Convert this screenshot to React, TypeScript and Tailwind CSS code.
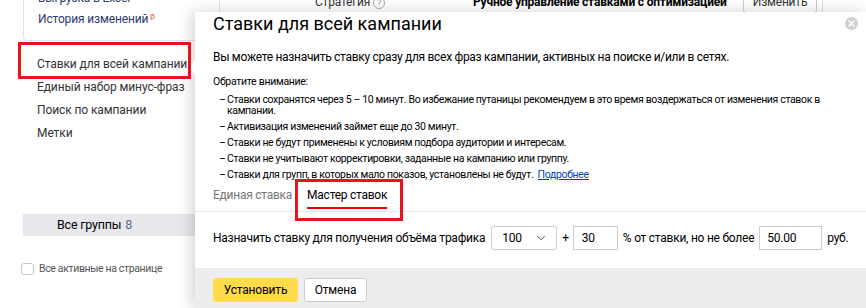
import { ChevronDown } from 'lucide-react';

const navItems = ['Ставки для всей кампании', 'Единый набор минус-фраз', 'Поиск по кампании', 'Метки'];

const notes = [
  'Активизация изменений займет еще до 30 минут.',
  'Ставки не будут применены к условиям подбора аудитории и интересам.',
  'Ставки не учитывают корректировки, заданные на кампанию или группу.',
];

function Sidebar() {
  return (
    <aside className="w-[220px] shrink-0 pl-[23px]">
      {/* tools box, top is scrolled out of view */}
      <div className="-mt-[13px] pb-[10px] pl-[14px] border border-[#e3e3e3] rounded-bl-[4px] text-[12px] tracking-[-0.15px] leading-[21px] text-[#2d3a6e]">
        <div>Выгрузка в Excel</div>
        <div>
          История изменений
          <sup className="ml-[2px] text-[8px] text-[#f33]">β</sup>
        </div>
      </div>

      <ul className="mt-[12px] pl-[14px] text-[12px] tracking-[-0.1px] leading-[23px] text-[#333]">
        {navItems.map((item) => (
          <li key={item}>{item}</li>
        ))}
      </ul>

      <div className="mt-[69px] h-[22px] flex items-center pl-[34px] bg-[#e8e8ec] text-[12.5px] tracking-[-0.2px] text-black">
        Все группы <span className="ml-[4px] text-[#5b6a8c]">8</span>
      </div>

      <label className="mt-[25px] -ml-[2px] flex items-center gap-[5px] text-[10.5px] tracking-[-0.35px] text-[#555]">
        <span className="w-[13px] h-[12px] rounded-[3px] border border-[#c8c8c8] bg-white" />
        Все активные на странице
      </label>
    </aside>
  );
}

function TopStrip() {
  return (
    <div className="-mt-[9px] flex items-center h-[22px] text-[12px] tracking-[-0.2px]">
      <span className="w-[253px] shrink-0 pl-[95px] text-[#333] whitespace-nowrap">
        Стратегия{' '}
        <span className="inline-block w-[12px] h-[12px] rounded-full border border-[#aaa] text-[9px] leading-[10px] text-center text-[#999]">?</span>
      </span>
      <span className="w-[270px] shrink-0 overflow-hidden font-bold text-black whitespace-nowrap">
        Ручное управление ставками с оптимизацией
      </span>
      <span className="w-[74px] h-[22px] flex items-center justify-center border border-[#ccc] rounded-[3px] text-[#333]">Изменить</span>
      <span className="ml-[5px] h-[22px] border-l border-[#ddd]" />
    </div>
  );
}

function BidsPopup() {
  return (
    <div className="absolute left-[195px] top-[12px] right-0 bottom-0 bg-white shadow-[-3px_0_14px_rgba(0,0,0,0.18)]">
      {/* pointer to the menu item */}
      <div className="absolute -left-[6px] top-[49px] w-[12px] h-[12px] rotate-45 bg-white border-l border-b border-[#e2e2e2]" />

      <button className="absolute right-[8px] top-[5px] w-[13px] h-[13px] rounded-full bg-[#cfcfcf] flex items-center justify-center">
        <svg width="7" height="7" viewBox="0 0 7 7">
          <path d="M1 1l5 5M6 1l-5 5" stroke="#fff" strokeWidth="1.6" strokeLinecap="round" />
        </svg>
      </button>

      <div className="relative px-[18px]">
        <h2 className="pt-[1px] text-[18px] leading-[22px] text-black">Ставки для всей кампании</h2>
        <p className="mt-[11px] text-[12px] tracking-[-0.3px] leading-[22px] text-black">
          Вы можете назначить ставку сразу для всех фраз кампании, активных на поиске и/или в сетях.
        </p>
        <p className="mt-[6px] text-[10.5px] tracking-[-0.3px] leading-[16px] text-black">Обратите внимание:</p>
        <ul className="mt-[4px] pl-[6px] text-[10.5px] tracking-[-0.35px] leading-[11px] text-black">
          <li className="flex">
            <span className="w-[8px] shrink-0">–</span>
            <span>
              Ставки сохранятся через 5 – 10 минут. Во избежание путаницы рекомендуем в это время воздержаться от изменения ставок в
              <br />
              кампании.
            </span>
          </li>
          {notes.map((n) => (
            <li key={n} className="mt-[5px] flex">
              <span className="w-[8px] shrink-0">–</span>
              <span>{n}</span>
            </li>
          ))}
          <li className="mt-[5px] flex">
            <span className="w-[8px] shrink-0">–</span>
            <span>
              Ставки для групп, в которых мало показов, установлены не будут.{' '}
              <a className="ml-[2px] text-[#04b] underline">Подробнее</a>
            </span>
          </li>
        </ul>
      </div>

      <div className="flex items-end h-[32px] pl-[18px] gap-[15px] border-b border-[#e5e5e5] text-[12px] tracking-[-0.25px] leading-[16px]">
        <span className="pb-[8px] text-[#777]">Единая ставка</span>
        <span className="pb-[2px] text-black">
          <span className="block pb-[4px]">Мастер ставок</span>
          <span className="block h-[2px] bg-[#e00]" />
        </span>
      </div>

      <div className="h-[56px] pb-[4px] flex items-center pl-[18px] text-[12px] tracking-[-0.25px] text-black whitespace-nowrap">
        <span>Назначить ставку для получения объёма трафика</span>
        <span className="ml-[6px] w-[66px] h-[24px] flex items-center justify-between pl-[10px] pr-[8px] border border-[#ccc] rounded-[3px]">
          100
          <ChevronDown size={14} strokeWidth={1.5} className="text-[#333]" />
        </span>
        <span className="ml-[5px]">+</span>
        <span className="ml-[4px] w-[45px] h-[24px] flex items-center pl-[8px] border border-[#ccc]">30</span>
        <span className="ml-[5px]">% от ставки, но не более</span>
        <span className="ml-[5px] w-[63px] h-[24px] flex items-center pl-[7px] border border-[#ccc]">50.00</span>
        <span className="ml-[5px]">руб.</span>
      </div>

      <div className="h-[40px] bg-[#ededed] flex items-start pt-[10px] pl-[18px] gap-[6px] text-[12px] tracking-[-0.2px]">
        <button className="w-[85px] h-[24px] rounded-[3px] bg-[#ffdb4d] text-black">Установить</button>
        <button className="w-[63px] h-[24px] rounded-[3px] bg-white border border-[#ccc] text-black">Отмена</button>
      </div>
    </div>
  );
}

export default function App() {
  return (
    <div className="relative w-[866px] h-[308px] overflow-hidden bg-white font-['Roboto','Liberation_Sans',Arial,sans-serif]">
      <div className="flex">
        <Sidebar />
        <main className="flex-1">
          <TopStrip />
        </main>
      </div>

      <BidsPopup />

      {/* red highlight frames */}
      <div className="absolute left-[18px] top-[42px] w-[173px] h-[37px] border-[3px] border-[#e8131b]" />
      <div className="absolute left-[295px] top-[179px] w-[108px] h-[42px] border-[3px] border-[#e8131b]" />
    </div>
  );
}
